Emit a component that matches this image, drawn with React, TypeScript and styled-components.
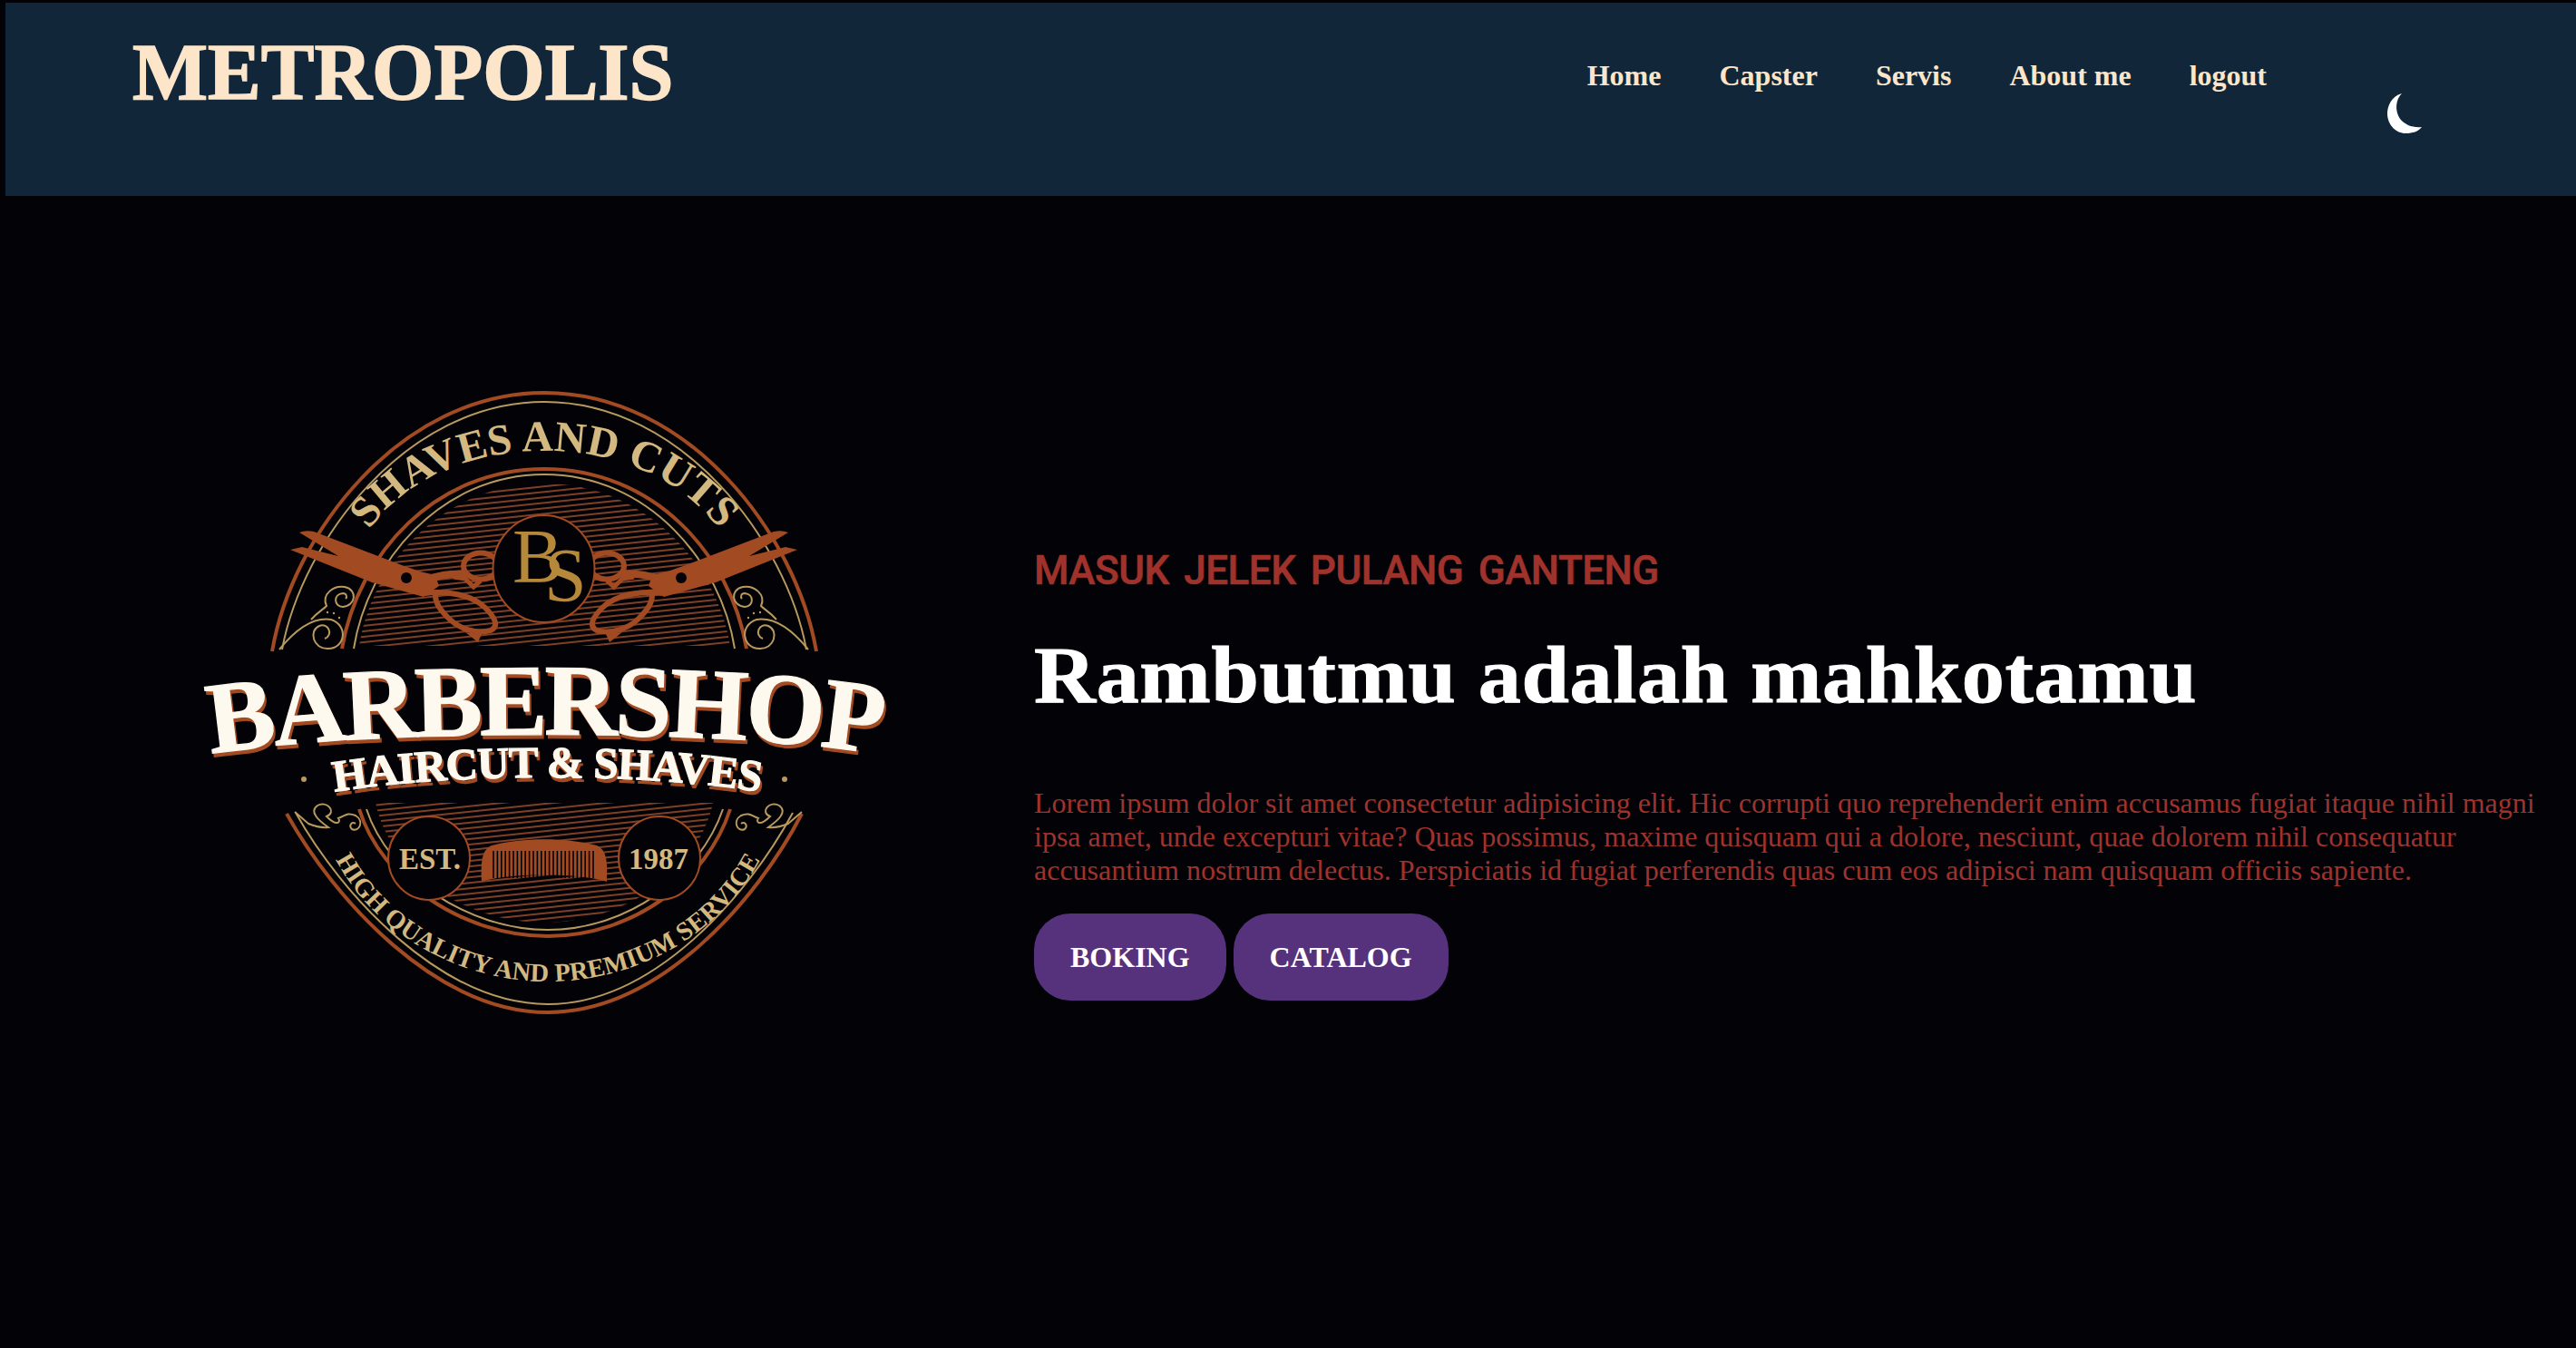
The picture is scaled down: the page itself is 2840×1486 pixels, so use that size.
import styled, { createGlobalStyle } from 'styled-components';

const RUST = '#a24a22';
const TAN = '#b89a5e';
const SAND = '#d3b880';

const GlobalStyle = createGlobalStyle`
  html, body {
    margin: 0;
    padding: 0;
    background-color: #020207;
  }
  body {
    font-family: 'Liberation Serif', 'Times New Roman', serif;
  }
`;

const Page = styled.div`
  min-height: 1486px;
  padding-top: 3px;
  box-sizing: border-box;
  overflow: hidden;
`;

const Header = styled.header`
  display: flex;
  align-items: flex-start;
  height: 213px;
  margin-left: 6px;
  padding: 0 168px 0 140px;
  background-color: #12263a;
`;

const Brand = styled.h1`
  margin: 20px auto 0 0;
  font-size: 88px;
  line-height: 113px;
  font-weight: 700;
  -webkit-text-stroke: 1.5px #fce5c9;
  color: #fce5c9;
`;

const Nav = styled.nav`
  display: flex;
  gap: 64px;
  margin-top: 62px;
`;

const NavLink = styled.a`
  font-size: 32px;
  line-height: 37px;
  font-weight: 700;
  color: #fce5c9;
  text-decoration: none;
`;

const MoonIcon = styled.svg`
  width: 42px;
  height: 50px;
  margin: 97px 0 0 131px;
  fill: #ffffff;
`;

const Hero = styled.main`
  display: flex;
  align-items: flex-start;
  padding: 204px 0 0 200px;
`;

const LogoSvg = styled.svg`
  flex: none;
  width: 800px;
  height: 710px;
`;

const HeroText = styled.section`
  width: 1660px;
  margin: 184px 0 0 140px;
`;

const Tagline = styled.h3`
  margin: 0;
  font-family: 'Roboto', sans-serif;
  font-size: 44px;
  line-height: 50px;
  font-weight: 500;
  letter-spacing: -0.5px;
  word-spacing: 6px;
  -webkit-text-stroke: 0.6px #a0322c;
  color: #a0322c;
`;

const Title = styled.h2`
  margin: 40px 0 0;
  font-size: 88px;
  line-height: 102px;
  font-weight: 700;
  letter-spacing: 0.6px;
  -webkit-text-stroke: 1px #ffffff;
  color: #ffffff;
  transform: scaleX(1.07);
  transform-origin: left center;
`;

const Lorem = styled.p`
  margin: 71px 0 0;
  font-size: 32px;
  line-height: 37px;
  color: #a0322c;
`;

const ButtonRow = styled.div`
  display: flex;
  gap: 8px;
  margin-top: 29px;
`;

const ActionButton = styled.button`
  height: 96px;
  padding: 0 40px;
  border: none;
  border-radius: 40px;
  background-color: #56317c;
  font-family: inherit;
  font-size: 32px;
  font-weight: 700;
  color: #ffffff;
`;

// logo parts, the svg viewBox uses page coordinates
const Stroke = styled.path<{ $color: string; $width?: number }>`
  fill: none;
  stroke: ${(p) => p.$color};
  stroke-width: ${(p) => p.$width ?? 2}px;
`;

const Solid = styled.path`
  fill: ${RUST};
  fill-rule: evenodd;
`;

const Medallion = styled.ellipse`
  fill: #020207;
  stroke: ${RUST};
  stroke-width: 2px;
`;

const ArcText = styled.text<{ $size: number; $color: string; $spacing?: number; $shadow?: boolean }>`
  font-family: 'Liberation Serif', serif;
  font-weight: 700;
  font-size: ${(p) => p.$size}px;
  letter-spacing: ${(p) => p.$spacing ?? 0}px;
  fill: ${(p) => p.$color};
  text-anchor: middle;
  ${(p) => p.$shadow && `stroke: ${p.$color}; stroke-width: 1.2px; filter: drop-shadow(2px 4px 0 ${RUST});`}
`;

const Monogram = styled.text<{ $size: number }>`
  font-family: 'Liberation Serif', serif;
  font-size: ${(p) => p.$size}px;
  fill: #b5883a;
`;

const outerArch = 'M300 718C322 590 440 433 600 433C760 433 878 590 900 718';
const tanArch = 'M311 716C333 597 447 443 600 443C753 443 867 597 889 716';
const innerArch = 'M377 715C395 610 480 517 600 517C720 517 805 610 823 715';
const innerTan = 'M390 715C405 620 485 523 600 523C715 523 795 620 810 715';
const outerBowl = 'M316 897C368 990 480 1116 604 1116C728 1116 836 990 884 897';
const tanBowl = 'M326 896C376 985 486 1107 604 1107C722 1107 826 985 874 896';
const innerBowl = 'M396 892C420 970 510 1032 604 1032C698 1032 780 970 805 892';
const innerBowlTan = 'M404 892C428 965 515 1025 604 1025C693 1025 772 965 797 892';

function Scissors() {
  return (
    <>
      <Stroke $color={RUST} $width={6} d="M468 654C490 651 520 655 535 670C545 680 551 690 541 695C525 700 505 692 495 682C485 672 480 665 480 656" />
      <Solid d="M513 697L531 699L527 708Z" />
      <ellipse cx="530" cy="624" rx="19" ry="14.5" fill="none" stroke={RUST} strokeWidth="6" />
      <Stroke $color={RUST} $width={8} d="M468 640C485 633 497 633 514 632" />
      <Stroke $color={RUST} $width={5} d="M500 636L513 638L522 647L530 640" />
      <Solid d="M330 587Q337 584 346 586L443 623Q452 626 463 630L480 634L484 646L467 658L410 642L320 606L333 603L373 613Z" />
      <circle cx="448" cy="637" r="6" fill="#020207" />
    </>
  );
}

function Flourish() {
  return (
    <>
      <Stroke $color={TAN} d="M308 716C325 695 345 680 365 683C385 690 380 715 362 715C345 716 340 695 352 690C362 686 368 700 358 704" />
      <Stroke $color={TAN} d="M343 683C350 675 356 672 360 668C354 655 368 645 380 647C395 650 392 668 378 669C368 669 367 655 378 654C382 654 383 658 381 660" />
      <circle cx="361" cy="675" r="1.2" fill={TAN} />
      <circle cx="368" cy="676" r="1.2" fill={TAN} />
      <circle cx="374" cy="681" r="1.2" fill={TAN} />
    </>
  );
}

function BowlFlourish() {
  return (
    <Stroke
      $color={TAN}
      d="M325 895L340 908Q352 913 362 912C352 905 340 895 350 888C360 882 372 895 360 900C372 912 376 906 373 902C380 900 382 895 392 899C402 905 396 918 388 914C384 910 388 905 392 908"
    />
  );
}

function Comb() {
  const teeth = Array.from({ length: 26 }, (_, i) => 544 + i * 4.4);
  return (
    <>
      <Solid d="M531 972C530 950 531 937 542 932C575 923 625 923 658 932C669 937 670 950 669 972C640 962 560 962 531 972Z" />
      {teeth.map((x) => (
        <Stroke key={x} $color="#020207" $width={1.6} d={`M${x} 938V968`} />
      ))}
    </>
  );
}

function BarberLogo() {
  return (
    <LogoSvg viewBox="200 420 800 710">
      <defs>
        <pattern id="hatch" width="60" height="6" patternUnits="userSpaceOnUse" patternTransform="rotate(-6)">
          <line x1="0" y1="2" x2="60" y2="2" stroke="#7d4026" strokeWidth="1.8" />
        </pattern>
        <path id="arc-top" d="M385 625C415 545 500 497 600 497C700 497 785 545 815 625" />
        <path id="arc-name" d="M200 836C330 814 470 810 600 810C730 810 870 814 1000 836" />
        <path id="arc-sub" d="M340 878C420 862 520 857 603 857C686 857 786 862 866 878" />
        <path id="arc-bottom" d="M350 895C378 1010 490 1082 604 1082C718 1082 830 1010 858 895" />
      </defs>

      <path d="M396 712C410 620 490 533 600 533C710 533 790 620 805 712Z" fill="url(#hatch)" />
      <path d="M414 885C430 960 510 1017 600 1017C690 1017 770 960 786 885Z" fill="url(#hatch)" />

      <Stroke $color={RUST} $width={4} d={outerArch} />
      <Stroke $color={TAN} d={tanArch} />
      <Stroke $color={RUST} $width={4} d={innerArch} />
      <Stroke $color={TAN} d={innerTan} />
      <Stroke $color={RUST} $width={4} d={outerBowl} />
      <Stroke $color={TAN} d={tanBowl} />
      <Stroke $color={RUST} $width={4} d={innerBowl} />
      <Stroke $color={TAN} d={innerBowlTan} />

      <Flourish />
      <g transform="translate(1199 0) scale(-1 1)">
        <Flourish />
      </g>
      <BowlFlourish />
      <g transform="translate(1209 0) scale(-1 1)">
        <BowlFlourish />
      </g>

      <ArcText $size={48} $color={SAND}>
        <textPath href="#arc-top" startOffset="50%">SHAVES AND CUTS</textPath>
      </ArcText>

      <Scissors />
      <g transform="translate(1199 0) scale(-1 1)">
        <Scissors />
      </g>

      <Medallion cx="599.5" cy="627" rx="56" ry="59" />
      <Monogram $size={84} x="565" y="642">B</Monogram>
      <Monogram $size={84} x="600" y="663">S</Monogram>

      <ArcText $size={112} $color="#fdf9ee" $spacing={-3.5} $shadow>
        <textPath href="#arc-name" startOffset="50%">BARBERSHOP</textPath>
      </ArcText>
      <ArcText $size={49} $color="#fdf9ee" $spacing={-1} $shadow>
        <textPath href="#arc-sub" startOffset="50%">HAIRCUT &amp; SHAVES</textPath>
      </ArcText>
      <circle cx="335" cy="859" r="3" fill={TAN} />
      <circle cx="865" cy="859" r="3" fill={TAN} />

      <Comb />
      <Medallion cx="473" cy="946" rx="45" ry="46" />
      <Medallion cx="727" cy="946" rx="45" ry="46" />
      <ArcText $size={33} $color={SAND} x="474" y="958">EST.</ArcText>
      <ArcText $size={33} $color={SAND} x="726" y="958">1987</ArcText>

      <ArcText $size={28.5} $color={SAND}>
        <textPath href="#arc-bottom" startOffset="50%">HIGH QUALITY AND PREMIUM SERVICE</textPath>
      </ArcText>
    </LogoSvg>
  );
}

const links = ['Home', 'Capster', 'Servis', 'About me', 'logout'];

export default function App() {
  return (
    <Page>
      <GlobalStyle />
      <Header>
        <Brand>METROPOLIS</Brand>
        <Nav>
          {links.map((l) => (
            <NavLink key={l} href="#">{l}</NavLink>
          ))}
        </Nav>
        <MoonIcon viewBox="0 0 42 50">
          <path d="M18 3C6 6 2 18 2 25C2 38 12 47 22 47C30 47 36 45 40 40C30 41 22 38 16 31C10 22 11 10 18 3Z" />
        </MoonIcon>
      </Header>
      <Hero>
        <BarberLogo />
        <HeroText>
          <Tagline>MASUK JELEK PULANG GANTENG</Tagline>
          <Title>Rambutmu adalah mahkotamu</Title>
          <Lorem>
            Lorem ipsum dolor sit amet consectetur adipisicing elit. Hic corrupti quo reprehenderit enim accusamus fugiat itaque nihil magni ipsa amet, unde excepturi vitae? Quas possimus, maxime quisquam qui a dolore, nesciunt, quae dolorem nihil consequatur accusantium nostrum delectus. Perspiciatis id fugiat perferendis quas cum eos adipisci nam quisquam officiis sapiente.
          </Lorem>
          <ButtonRow>
            <ActionButton>BOKING</ActionButton>
            <ActionButton>CATALOG</ActionButton>
          </ButtonRow>
        </HeroText>
      </Hero>
    </Page>
  );
}
